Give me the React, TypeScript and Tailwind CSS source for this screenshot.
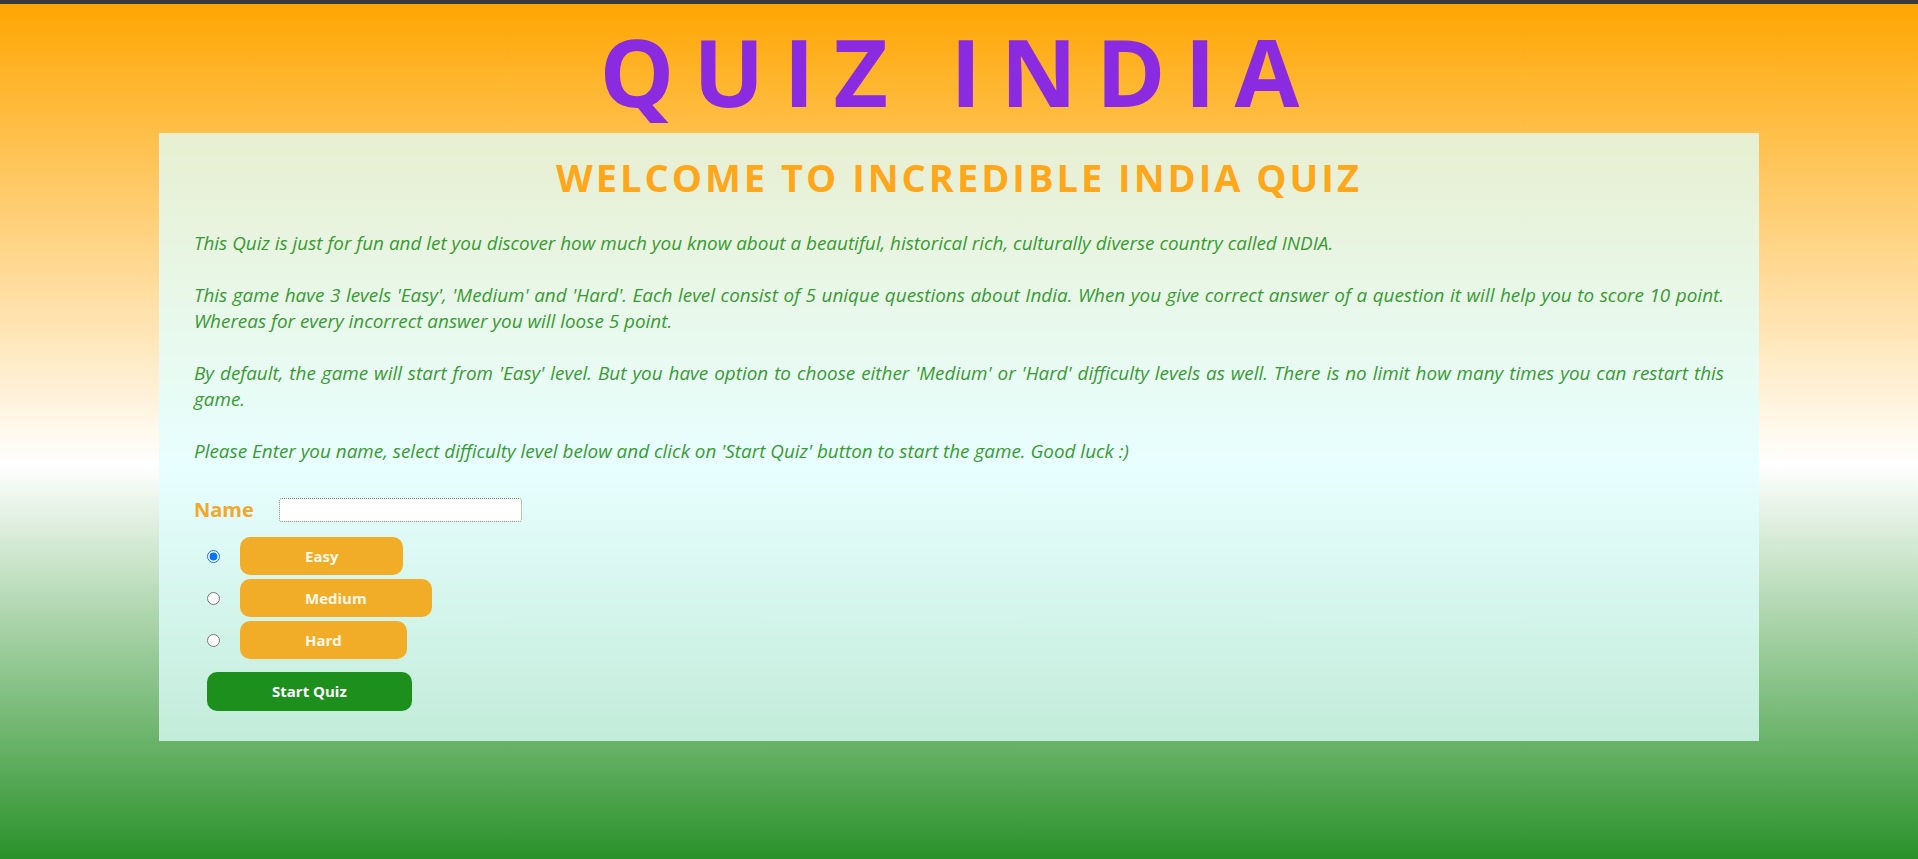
import { useState } from "react";

const levels = ["Easy", "Medium", "Hard"];

export default function App() {
  const [level, setLevel] = useState("Easy");

  return (
    <div className="min-h-screen bg-[linear-gradient(#ffa500,#ffffff_54%,#2a922a)] font-['Open_Sans',sans-serif]">
      <div className="h-1 bg-[#3a3a3a]" />
      <h1 className="pt-[6px] text-center text-[94px] font-bold leading-[123px] tracking-[19px] text-[#8a2be2]">
        QUIZ INDIA
      </h1>
      <main className="mx-auto w-[1600px] bg-[#e0ffff]/75 px-[35px] pt-[18px] pb-[30px]">
        <h2 className="text-center text-[38px] font-bold leading-[52px] tracking-[3px] text-[#ffa71a]">
          WELCOME TO INCREDIBLE INDIA QUIZ
        </h2>
        <div className="mt-[27px] flex flex-col gap-[26px] text-justify text-[18.9px] italic leading-[26px] text-[#3a9a35]">
          <p>
            This Quiz is just for fun and let you discover how much you know about a beautiful, historical rich, culturally diverse country called INDIA.
          </p>
          <p>
            This game have 3 levels 'Easy', 'Medium' and 'Hard'. Each level consist of 5 unique questions about India. When you give correct answer of a question it will help you to score 10 point. Whereas for every incorrect answer you will loose 5 point.
          </p>
          <p>
            By default, the game will start from 'Easy' level. But you have option to choose either 'Medium' or 'Hard' difficulty levels as well. There is no limit how many times you can restart this game.
          </p>
          <p>
            Please Enter you name, select difficulty level below and click on 'Start Quiz' button to start the game. Good luck :)
          </p>
        </div>

        <form className="mt-[31px]" onSubmit={(e) => e.preventDefault()}>
          <div className="flex items-center">
            <label htmlFor="name" className="w-[85px] text-[20px] font-bold text-[#f4a72a]">
              Name
            </label>
            <input
              id="name"
              type="text"
              className="h-[24px] w-[243px] rounded-[3px] border border-dotted border-[#6f8f6f] bg-white px-1 text-sm outline-none"
            />
          </div>
          <div className="mt-[12px] flex flex-col gap-[4px]">
            {levels.map((l) => (
              <div key={l} className="flex items-center">
                <input
                  type="radio"
                  name="level"
                  checked={level === l}
                  onChange={() => setLevel(l)}
                  className="ml-[13px] h-[13px] w-[13px]"
                />
                <button
                  type="button"
                  onClick={() => setLevel(l)}
                  className="ml-[20px] h-[38px] rounded-[10px] bg-[#f1ad28] px-[65px] text-[15px] font-bold text-[#fff8ea]"
                >
                  {l}
                </button>
              </div>
            ))}
          </div>
          <button
            type="submit"
            className="mt-[13px] ml-[13px] h-[39px] rounded-[10px] bg-[#1d8f1d] px-[65px] text-[15px] font-bold text-white"
          >
            Start Quiz
          </button>
        </form>
      </main>
    </div>
  );
}
